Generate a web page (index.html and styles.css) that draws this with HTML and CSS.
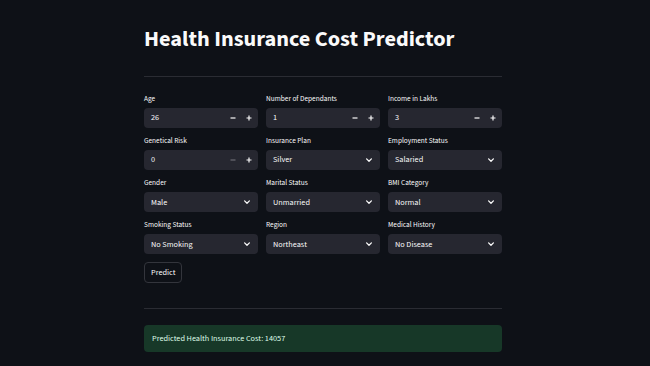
FILE: index.html
```html
<!DOCTYPE html>
<html>
<head>
<meta charset="utf-8">
<link rel="stylesheet" href="styles.css">
</head>
<body>
<main class="app">
  <h1 class="title">Health Insurance Cost Predictor</h1>
  <hr class="divider">
  <div class="grid">
    <div class="field"><label>Age</label><div class="box num"><span class="val">26</span><span class="step"><svg class="ico" viewBox="0 0 8 8"><path d="M1.5 4h5"/></svg></span><span class="step"><svg class="ico" viewBox="0 0 8 8"><path d="M1.5 4h5M4 1.5v5"/></svg></span></div></div>
    <div class="field"><label>Number of Dependants</label><div class="box num"><span class="val">1</span><span class="step"><svg class="ico" viewBox="0 0 8 8"><path d="M1.5 4h5"/></svg></span><span class="step"><svg class="ico" viewBox="0 0 8 8"><path d="M1.5 4h5M4 1.5v5"/></svg></span></div></div>
    <div class="field"><label>Income in Lakhs</label><div class="box num"><span class="val">3</span><span class="step"><svg class="ico" viewBox="0 0 8 8"><path d="M1.5 4h5"/></svg></span><span class="step"><svg class="ico" viewBox="0 0 8 8"><path d="M1.5 4h5M4 1.5v5"/></svg></span></div></div>

    <div class="field"><label>Genetical Risk</label><div class="box num"><span class="val">0</span><span class="step dim"><svg class="ico" viewBox="0 0 8 8"><path d="M1.5 4h5"/></svg></span><span class="step"><svg class="ico" viewBox="0 0 8 8"><path d="M1.5 4h5M4 1.5v5"/></svg></span></div></div>
    <div class="field"><label>Insurance Plan</label><div class="box"><span class="val">Silver</span><svg class="chev" viewBox="0 0 10 10"><path d="M2.6 3.9 5 6.2 7.4 3.9"/></svg></div></div>
    <div class="field"><label>Employment Status</label><div class="box"><span class="val">Salaried</span><svg class="chev" viewBox="0 0 10 10"><path d="M2.6 3.9 5 6.2 7.4 3.9"/></svg></div></div>

    <div class="field"><label>Gender</label><div class="box"><span class="val">Male</span><svg class="chev" viewBox="0 0 10 10"><path d="M2.6 3.9 5 6.2 7.4 3.9"/></svg></div></div>
    <div class="field"><label>Marital Status</label><div class="box"><span class="val">Unmarried</span><svg class="chev" viewBox="0 0 10 10"><path d="M2.6 3.9 5 6.2 7.4 3.9"/></svg></div></div>
    <div class="field"><label>BMI Category</label><div class="box"><span class="val">Normal</span><svg class="chev" viewBox="0 0 10 10"><path d="M2.6 3.9 5 6.2 7.4 3.9"/></svg></div></div>

    <div class="field"><label>Smoking Status</label><div class="box"><span class="val">No Smoking</span><svg class="chev" viewBox="0 0 10 10"><path d="M2.6 3.9 5 6.2 7.4 3.9"/></svg></div></div>
    <div class="field"><label>Region</label><div class="box"><span class="val">Northeast</span><svg class="chev" viewBox="0 0 10 10"><path d="M2.6 3.9 5 6.2 7.4 3.9"/></svg></div></div>
    <div class="field"><label>Medical History</label><div class="box"><span class="val">No Disease</span><svg class="chev" viewBox="0 0 10 10"><path d="M2.6 3.9 5 6.2 7.4 3.9"/></svg></div></div>
  </div>
  <button class="btn">Predict</button>
  <hr class="divider lower">
  <div class="success">Predicted Health Insurance Cost: 14057</div>
</main>
</body>
</html>
```
FILE: styles.css
```css
html, body {
  margin: 0;
  padding: 0;
  background: #0e1117;
  color: #fafafa;
  font-family: "Source Sans 3", "Lato", sans-serif;
}
.app {
  width: 358px;
  margin-left: 144px;
  padding-top: 23.5px;
}
.title {
  margin: 0;
  font-size: 22.3px;
  font-weight: 700;
  line-height: 30px;
}
.divider {
  border: 0;
  border-top: 1px solid #2a2c33;
  margin: 22px 0 17px;
}
.grid {
  display: grid;
  grid-template-columns: repeat(3, 1fr);
  column-gap: 8px;
  row-gap: 7.9px;
}
.field label {
  display: block;
  font-size: 7.3px;
  line-height: 10px;
  height: 10px;
  margin-bottom: 4px;
  color: #fafafa;
}
.box {
  height: 20.3px;
  background: #262730;
  border-radius: 4px;
  display: flex;
  align-items: center;
  padding: 0 6px 0 7px;
  font-size: 8.2px;
}
.box.num { padding-right: 1px; }
.val { flex: 1; }
.step {
  width: 16px;
  height: 100%;
  display: flex;
  align-items: center;
  justify-content: center;
}
.ico {
  width: 8px;
  height: 8px;
  fill: none;
  stroke: #fafafa;
  stroke-width: 1.2;
}
.step.dim .ico { stroke: #6b6c74; }
.chev {
  width: 10px;
  height: 10px;
  fill: none;
  stroke: #fafafa;
  stroke-width: 1.3;
  stroke-linecap: round;
  stroke-linejoin: round;
}
.btn {
  display: block;
  margin-top: 8px;
  background: #0e1117;
  color: #fafafa;
  border: 1px solid #33353c;
  border-radius: 4px;
  height: 21px;
  padding: 0 6px;
  font-family: inherit;
  font-size: 8.2px;
}
.lower { margin: 24.5px 0 16px; }
.success {
  background: #173828;
  border-radius: 4px;
  height: 27px;
  display: flex;
  align-items: center;
  padding: 0 8px;
  font-size: 8.2px;
  color: #dffde9;
}
```
